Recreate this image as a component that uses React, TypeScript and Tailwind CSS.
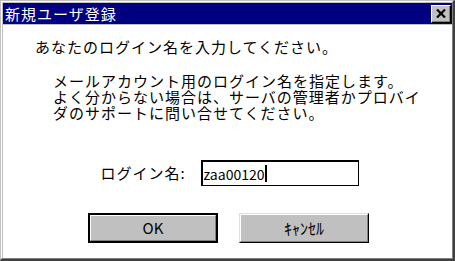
const App = () => {
  return (
    <div className="flex h-[261px] w-[455px] border-t border-l border-[#c0c0c0] border-r-2 border-b-2 border-r-[#404040] border-b-[#404040] font-['Noto_Sans_CJK_JP',sans-serif]">
      <div className="flex flex-1 flex-col border-t border-l border-white border-r border-b border-r-[#808080] border-b-[#808080]">
        <div className="flex flex-1 flex-col border-t border-l border-[#c0c0c0] bg-white">
          {/* Title bar */}
          <div className="flex h-[21px] items-center justify-between bg-[#000080] pl-[2px] pr-px">
            <span className="text-[15px] leading-[16px] tracking-[1px] text-white">
              新規ユーザ登録
            </span>
            <button className="flex h-[18px] w-[20px] border-t border-l border-white border-r border-b border-r-black border-b-black bg-[#c0c0c0]">
              <span className="flex flex-1 items-center justify-center border-r border-b border-[#808080]">
                <svg width="10" height="9" viewBox="0 0 10 9">
                  <path d="M1 0.5 L9 8.5 M9 0.5 L1 8.5" stroke="black" strokeWidth="2.2" />
                </svg>
              </span>
            </button>
          </div>
          <div className="h-px bg-[#c0c0c0]" />

          {/* Body */}
          <div className="flex flex-1 flex-col pt-[14px] text-[15px] leading-[16px] tracking-[1px] text-black">
            <p className="whitespace-nowrap pl-[32px]">
              あなたのログイン名を入力してください。
            </p>
            <div className="mt-[18px] pl-[50px] whitespace-nowrap">
              <p>メールアカウント用のログイン名を指定します。</p>
              <p>よく分からない場合は、サーバの管理者かプロバイ</p>
              <p>ダのサポートに問い合せてください。</p>
            </div>

            <div className="mt-[39px] flex items-center justify-center gap-[15px] pl-[4px]">
              <span className="whitespace-nowrap">ログイン名:</span>
              <div className="flex h-[26px] w-[158px] items-center border-t-2 border-l-2 border-r border-b border-black pl-[1px] tracking-normal">
                <span className="text-[14px] leading-[16px]">zaa00120</span>
                <span className="ml-px h-[17px] w-[2px] bg-black" />
              </div>
            </div>

            <div className="mt-[27px] flex justify-center gap-[21px] pl-[2px] tracking-normal">
              <button className="flex h-[30px] w-[130px] border-2 border-black bg-[#c0c0c0]">
                <span className="flex flex-1 items-center justify-center border-t border-l border-white border-r border-b border-r-[#808080] border-b-[#808080] text-[15px]">
                  OK
                </span>
              </button>
              <button className="flex h-[30px] w-[130px] border-t border-l border-[#dfdfdf] border-r border-b border-r-black border-b-black bg-[#c0c0c0]">
                <span className="flex flex-1 items-center justify-center border-t border-l border-white border-r border-b border-r-[#808080] border-b-[#808080] text-[16px]">
                  ｷｬﾝｾﾙ
                </span>
              </button>
            </div>
          </div>
        </div>
      </div>
    </div>
  );
};

export default App;
